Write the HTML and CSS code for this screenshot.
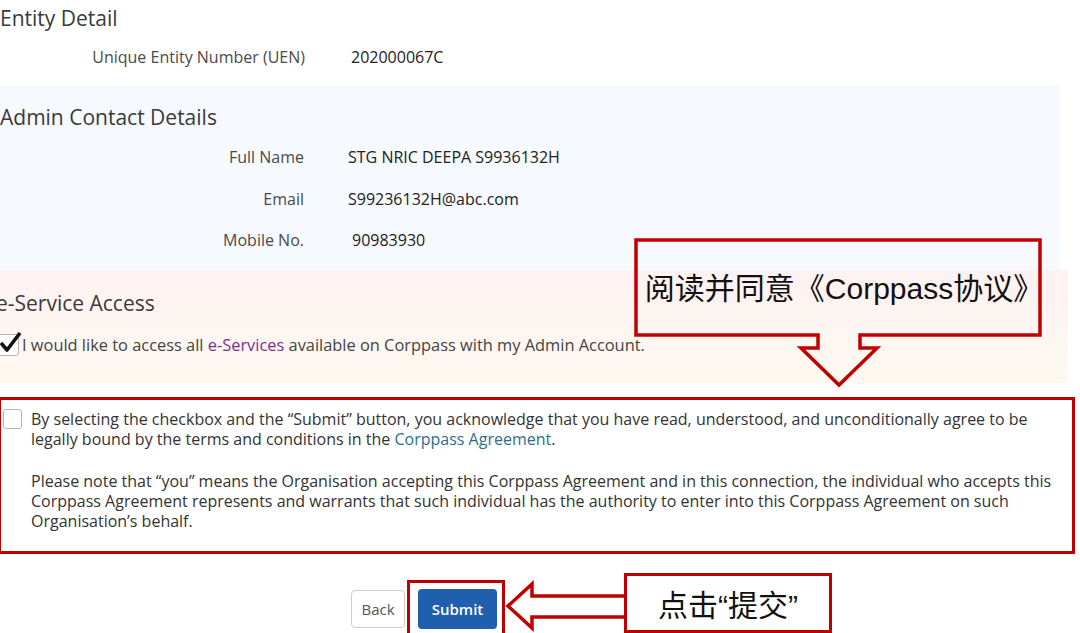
FILE: index.html
```html
<!DOCTYPE html>
<html lang="en">
<head>
  <meta charset="UTF-8">
  <meta name="viewport" content="width=device-width, initial-scale=1.0">
  <title>Corppass - Review</title>
  <link rel="stylesheet" href="styles.css">
</head>
<body>
  <div class="page">
    <section class="entity">
      <h2>Entity Detail</h2>
      <div class="details">
        <div class="label">Unique Entity Number (UEN)</div>
        <div class="value uen">202000067C</div>
      </div>
    </section>

    <section class="admin">
      <h2>Admin Contact Details</h2>
      <div class="details">
        <div class="label">Full Name</div>
        <div class="value">STG NRIC DEEPA S9936132H</div>
        <div class="label">Email</div>
        <div class="value">S99236132H@abc.com</div>
        <div class="label">Mobile No.</div>
        <div class="value mobile">90983930</div>
      </div>
    </section>

    <section class="eservice">
      <h2>e-Service Access</h2>
      <div class="check-row">
        <span class="checkbox checked">
          <svg width="26" height="24" viewBox="0 0 26 24"><path d="M3 12 L9 19 L22 2" fill="none" stroke="#111" stroke-width="3.6" stroke-linejoin="round"/></svg>
        </span>
        <span>I would like to access all <a href="#" class="purple">e-Services</a> available on Corppass with my Admin Account.</span>
      </div>
    </section>

    <section class="agreement">
      <span class="checkbox"></span>
      <div class="terms">
        <p>By selecting the checkbox and the “Submit” button, you acknowledge that you have read, understood, and unconditionally agree to be legally bound by the terms and conditions in the <a href="#" class="teal">Corppass Agreement</a>.</p>
        <p>Please note that “you” means the Organisation accepting this Corppass Agreement and in this connection, the individual who accepts this Corppass Agreement represents and warrants that such individual has the authority to enter into this Corppass Agreement on such Organisation’s behalf.</p>
      </div>
    </section>

    <div class="actions">
      <button class="btn btn-back">Back</button>
      <div class="mark">
        <button class="btn btn-submit">Submit</button>
      </div>
      <svg class="arrow-left" width="119" height="58" viewBox="0 0 119 58">
        <path d="M119 16 H27 V4 L3 26 L27 48 V37 H119" fill="#fff" stroke="#c00000" stroke-width="3.5" stroke-linejoin="miter"/>
      </svg>
      <div class="note note-submit">点击“提交”</div>
    </div>

    <div class="callout">
      <svg class="callout-shape" width="414" height="152" viewBox="0 0 414 152">
        <path d="M2 2 H406 V97 H226 V110 H243 L205 147 L167 110 H184 V97 H2 Z" fill="none" stroke="#c00000" stroke-width="3.5"/>
      </svg>
      <span class="callout-text">阅读并同意《Corppass协议》</span>
    </div>
  </div>
</body>
</html>
```

FILE: styles.css
```css
* {
  margin: 0;
  padding: 0;
  box-sizing: border-box;
}

body {
  font-family: 'Open Sans', 'Noto Sans', sans-serif;
  background-color: #fff;
  color: #333;
  overflow: hidden;
}

.page {
  position: relative;
  width: 1080px;
  height: 633px;
  padding-top: 4px;
}

h2 {
  font-size: 21px;
  font-weight: 400;
  line-height: 28px;
  color: #3a3a3a;
}

.details {
  display: grid;
  grid-template-columns: 305px 1fr;
  column-gap: 46px;
  row-gap: 19.5px;
  font-size: 16px;
  line-height: 22px;
}

.label {
  text-align: right;
  color: #4a4a4a;
}

.value {
  color: #222;
}

.value.mobile {
  padding-left: 4px;
}

/* Entity */
.entity {
  padding-bottom: 17px;
}

.entity h2 {
  margin-bottom: 14px;
}

/* Admin contact */
.admin {
  width: 1060px;
  background-color: #f6f9fd;
  padding: 18px 0 19px;
}

.admin h2 {
  margin-bottom: 15px;
}

.admin .details {
  grid-template-columns: 304px 1fr;
  column-gap: 44px;
}

/* e-Service access */
.eservice {
  width: 1068px;
  background: linear-gradient(#fdf2f2, #fdf9f0);
  padding: 19px 0 27px;
}

.eservice h2 {
  margin-left: -4px;
  margin-bottom: 16px;
}

.check-row {
  display: flex;
  align-items: center;
  gap: 3px;
  margin-left: -3px;
  font-size: 16.4px;
  color: #444;
}

.checkbox {
  position: relative;
  display: inline-block;
  flex-shrink: 0;
  width: 22px;
  height: 22px;
  border: 1px solid #b5b5b5;
  border-radius: 3px;
  background: #fff;
}

.checkbox svg {
  position: absolute;
  left: 0;
  top: -4px;
}

a {
  text-decoration: none;
}

.purple {
  color: #7b2f92;
}

.teal {
  color: #2c6e8f;
}

/* Agreement */
.agreement {
  display: flex;
  align-items: flex-start;
  gap: 9px;
  margin: 14px 0 0 -2px;
  width: 1077px;
  border: 3px solid #c00000;
  padding: 9px 10px 20px 2px;
}

.agreement .checkbox {
  width: 19px;
  height: 20px;
}

.terms {
  font-size: 16px;
  line-height: 20px;
  color: #333;
}

.terms p + p {
  margin-top: 22px;
}

/* Buttons */
.actions {
  display: flex;
  align-items: center;
  margin-top: 19px;
  padding-left: 351px;
}

.btn {
  font-family: 'Open Sans', sans-serif;
  font-size: 15px;
  height: 40px;
  padding: 0 8px;
  border-radius: 4px;
  cursor: pointer;
}

.btn-back {
  width: 54px;
  height: 38px;
  background: #fff;
  color: #555;
  border: 1px solid #ccc;
}

.btn-submit {
  width: 79px;
  background: #1f5fad;
  color: #fff;
  font-weight: 600;
  border: none;
}

.mark {
  margin-left: 2px;
  border: 3px solid #c00000;
  padding: 6px 5px 6px 8px;
}

.note {
  border: 3px solid #c00000;
  background: #fff;
  font-family: 'Liberation Sans', 'Noto Sans CJK SC', sans-serif;
  color: #111;
}

.note-submit {
  width: 208px;
  height: 60px;
  margin-bottom: 12px;
  display: flex;
  align-items: center;
  justify-content: center;
  font-size: 30px;
}

/* Callout over the e-Service section */
.callout {
  position: absolute;
  left: 634px;
  top: 238px;
  width: 410px;
  height: 95px;
  padding-left: 10px;
  display: flex;
  align-items: center;
  justify-content: center;
  font-family: 'Liberation Sans', 'Noto Sans CJK SC', sans-serif;
  font-size: 30px;
  color: #111;
}

.callout-shape {
  position: absolute;
  left: 0;
  top: 0;
}

.callout-text {
  position: relative;
}
```
